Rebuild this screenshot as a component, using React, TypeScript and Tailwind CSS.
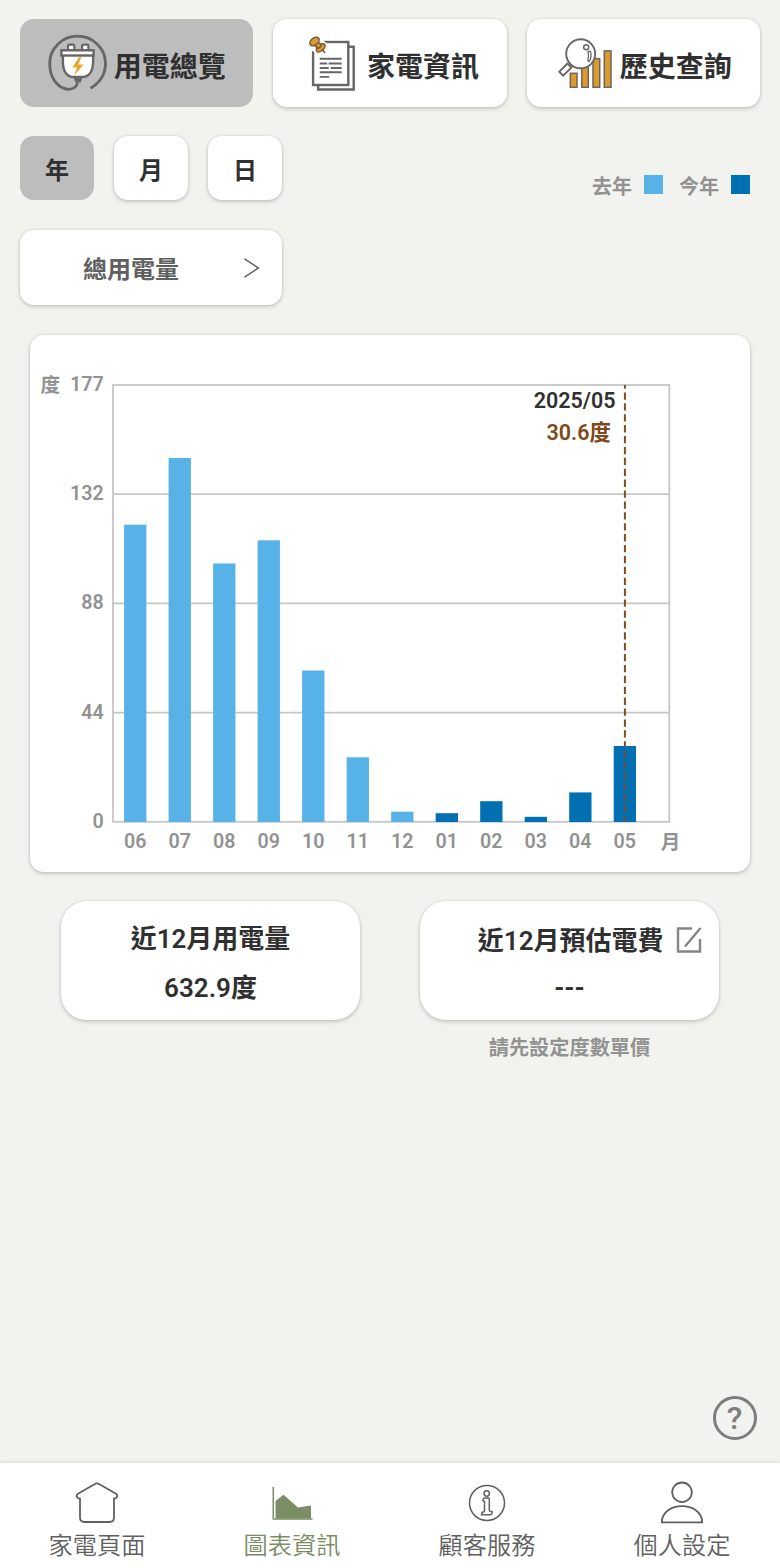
import type { ReactNode } from "react";

const FONT = "font-[Roboto,'Noto_Sans_CJK_TC',sans-serif]";
const CARD = "bg-white shadow-[0_2px_4px_rgba(0,0,0,0.16),0_0_3px_rgba(0,0,0,0.12)]";

function PlugIcon() {
  return (
    <svg className="h-[60px] w-[60px] shrink-0" viewBox="0 0 60 60" fill="none" stroke="#666" strokeWidth="2.800">
      <g transform="translate(-1 -1)">
        <path d="M30.500 50.500C30 54 27 57.300 21.500 57.300C10 56.500 2.700 45 2.700 31.500A27.900 27.300 0 0 1 58.500 31.500C58.500 42 53 50.500 43.500 56.300" />
        <rect x="21" y="12.600" width="6.300" height="6" rx="1.300" fill="#fff" strokeWidth="2.200" />
        <rect x="35.100" y="12.600" width="6.300" height="6" rx="1.300" fill="#fff" strokeWidth="2.200" />
        <path d="M15.900 22V31C16.500 40 20 45 27 45H35C42 45 45.500 40 46.100 31V22Z" fill="#fff" strokeWidth="2.400" />
        <rect x="14.400" y="18.300" width="32.200" height="5.200" fill="#fff" strokeWidth="2.400" />
        <path d="M27.500 46H34.500L33.500 50H28.500Z" fill="#666" strokeWidth="1" />
        <path d="M32 25L25.500 35.500H30L27.200 43.500L36.500 32.500H31.200L34.500 25Z" fill="#eba52d" stroke="none" />
      </g>
    </svg>
  );
}

function NotesIcon() {
  return (
    <svg className="h-[56px] w-[48px] shrink-0" viewBox="0 0 48 56" fill="none" stroke="#666" strokeWidth="2.400">
      <g transform="translate(-.3 1)">
        <path d="M41 10.700H46V53.500H10.500V49" />
        <rect x="5.400" y="6" width="35.200" height="43" fill="#fff" />
        <path d="M12 22.800H34M12 27.500H19.500M21 27.500H34M12 32H21M23 32H34M12 36.300H34M12 40.900H21.500" strokeWidth="1.900" />
      </g>
      <path d="M2 11L11 2L19.500 9L8 18.500L3 15Z" fill="#fff" stroke="none" />
      <g fill="#d39a3f" stroke="#765323" strokeWidth="1.400">
        <path d="M14 14L17 18" />
        <ellipse cx="12.700" cy="12.800" rx="5.300" ry="3" transform="rotate(-42 12.700 12.800)" />
        <path d="M5.800 9.500L9.700 13.500Q12.500 12.800 13.500 10L9.500 6.500Z" />
        <ellipse cx="6.500" cy="6.500" rx="5.300" ry="3.500" transform="rotate(-38 6.500 6.500)" />
      </g>
    </svg>
  );
}

function HistoryIcon() {
  return (
    <svg className="h-[54px] w-[56px] shrink-0" viewBox="0 0 56 54" fill="none" stroke="#666" strokeWidth="1.500">
      <g fill="#df9b29">
        <rect x="13.300" y="37.300" width="6.700" height="14" />
        <rect x="24.800" y="31" width="6.500" height="20.300" />
        <rect x="36" y="22.600" width="6.700" height="28.700" />
        <rect x="47.300" y="14.900" width="6.700" height="36.400" />
      </g>
      <path d="M10.500 27.500L2.300 35.700L6.100 39.700L14.500 31.500Z" fill="#fff" strokeWidth="1.900" />
      <circle cx="23.700" cy="17.800" r="14.500" fill="#fff" strokeWidth="1.900" />
      <circle cx="29.200" cy="11.300" r="2.500" />
      <path d="M31 15.500Q34 14.500 34 17.500Q34.500 22 32.500 25Q30.500 26 31 23Q32 20.500 31.200 17Z" strokeWidth="1.300" />
    </svg>
  );
}

function Tab({ label, icon, active = false, gap }: { label: string; icon: ReactNode; active?: boolean; gap: string }) {
  return (
    <button className={`flex h-[88px] items-center justify-center rounded-[14px] ${active ? "bg-[#bdbdbd]" : CARD} ${gap}`}>
      {icon}
      <span className="pt-[9px] text-[28px] leading-none font-bold">{label}</span>
    </button>
  );
}

function PeriodButton({ label, active = false }: { label: string; active?: boolean }) {
  return (
    <button className={`flex h-16 w-[74px] items-center justify-center rounded-[14px] pt-[5px] text-[24px] leading-none font-bold ${active ? "bg-[#bdbdbd]" : CARD}`}>
      {label}
    </button>
  );
}

const bars = [
  ["06", 297.3],
  ["07", 364],
  ["08", 258.5],
  ["09", 281.7],
  ["10", 151.5],
  ["11", 64.7],
  ["12", 10.3],
  ["01", 8.8],
  ["02", 20.8],
  ["03", 5.2],
  ["04", 29.6],
  ["05", 76],
] as const;

const ticks = ["177", "132", "88", "44", "0"];

function UsageChart() {
  return (
    <svg className="block h-[537px] w-[720px]" viewBox="0 0 720 537">
      <g stroke="#c6c6c6" strokeWidth="1.800" fill="none">
        <rect x="83" y="50" width="556.300" height="436.800" />
        <path d="M83 159.200H639.300M83 268.400H639.300M83 377.600H639.300" />
      </g>
      {bars.map(([month, height], i) => (
        <rect key={month} x={94.1 + i * 44.51} y={487 - height} width="22.300" height={height} fill={i < 7 ? "#56b2e7" : "#0070b2"} />
      ))}
      <path d="M594.900 50V411" stroke="#834c1d" strokeWidth="2" strokeDasharray="7.300 3.600" strokeDashoffset="3.500" />
      <path d="M594.900 411V487" stroke="#67504a" strokeWidth="2.500" strokeDasharray="7.300 3.600" strokeDashoffset="-4.500" />
      <g className="text-[19.7px] font-semibold" fill="#929292">
        {ticks.map((tick, i) => (
          <text key={tick} x="73.800" y={56 + i * 109.2} textAnchor="end">{tick}</text>
        ))}
        {bars.map(([month], i) => (
          <text key={month} x={105.2 + i * 44.51} y="513" textAnchor="middle">{month}</text>
        ))}
        <text x="10.500" y="56.500">度</text>
        <text x="640.500" y="513.500" textAnchor="middle">月</text>
      </g>
      <text className="text-[21.5px] font-semibold" x="585.500" y="73" textAnchor="end" fill="#303030">2025/05</text>
      <text className="text-[21.5px] font-semibold" x="581" y="105" textAnchor="end" fill="#804819">30.6度</text>
    </svg>
  );
}

function HomeIcon() {
  return (
    <svg className="h-[44px] w-[44px]" viewBox="0 0 44 44" fill="none" stroke="#606060" strokeWidth="1.800" strokeLinejoin="round">
      <path d="M5 17.500V36.500Q5 41 9.500 41H34.500Q39 41 39 36.500V17.500C42 18 43.500 14.500 41 12.700L24.500 3.200Q22 1.500 19.500 3.200L3 12.700C.5 14.500 2 18 5 17.500Z" />
    </svg>
  );
}

function AreaIcon() {
  return (
    <svg className="h-[44px] w-[44px]" viewBox="0 0 44 44" fill="#7a8d65">
      <path d="M2.500 6H4V37.200H42.500V38.700H2.500Z" />
      <path d="M5.500 20L13.500 13.800L28 26.500L41 24.600V37.500H5.500Z" />
    </svg>
  );
}

function InfoIcon() {
  return (
    <svg className="h-[44px] w-[44px]" viewBox="0 0 44 44" fill="none" stroke="#606060" strokeWidth="1.500">
      <circle cx="22" cy="22" r="17.500" />
      <circle cx="21.700" cy="12.500" r="2.700" />
      <path d="M18.800 17.500Q18.500 17 20.500 17H23.500Q24.300 17 24.300 18V29.500Q24.500 30.800 27 30.500Q27.500 33.800 25 33.800H16.500Q16.500 31 19 30.800Q19.500 30.700 19.500 29.500V20.500Q16.500 19.500 18.800 17.500Z" />
    </svg>
  );
}

function PersonIcon() {
  return (
    <svg className="h-[44px] w-[44px]" viewBox="0 0 44 44" fill="none" stroke="#606060" strokeWidth="1.800">
      <circle cx="22" cy="11.300" r="9.800" />
      <path d="M1.800 41.300C2 19.700 42 19.700 42.200 41.300Z" />
    </svg>
  );
}

function NavItem({ label, icon, active = false }: { label: string; icon: ReactNode; active?: boolean }) {
  return (
    <button className={`flex flex-col items-center pt-[18px] pr-px ${active ? "text-[#7a8d65]" : "text-[#606060]"}`}>
      {icon}
      <span className="mt-[9px] text-[24.2px] leading-6 font-[350]">{label}</span>
    </button>
  );
}

export default function App() {
  return (
    <div className={`flex h-[1568px] w-[780px] flex-col bg-[#f2f3ee] text-[#303030] ${FONT}`}>
      <header className="grid grid-cols-3 gap-5 px-5 pt-[19px]">
        <Tab label="用電總覽" icon={<PlugIcon />} active gap="gap-1.5" />
        <Tab label="家電資訊" icon={<NotesIcon />} gap="gap-[11px] pl-[7px]" />
        <Tab label="歷史查詢" icon={<HistoryIcon />} gap="gap-[7px] pl-0.5" />
      </header>

      <div className="mt-[29px] flex justify-between pr-[30px] pl-5">
        <div className="flex gap-5">
          <PeriodButton label="年" active />
          <PeriodButton label="月" />
          <PeriodButton label="日" />
        </div>
        <div className="flex items-center pt-[33px] text-[20px] leading-none font-bold text-[#929292]">
          <span className="pt-1">去年</span>
          <span className="ml-3 h-[19px] w-[19px] bg-[#56b2e7]" />
          <span className="ml-4 pt-1">今年</span>
          <span className="ml-3 h-[19px] w-[19px] bg-[#0070b2]" />
        </div>
      </div>

      <button className={`mt-[30px] ml-5 flex h-[75px] w-[262px] items-center justify-between rounded-[14px] pr-[22px] pl-[63px] ${CARD}`}>
        <span className="pt-1 text-[24px] leading-none font-bold text-[#606060]">總用電量</span>
        <svg className="h-5 w-4" viewBox="0 0 16 20" fill="none" stroke="#606060" strokeWidth="1.500">
          <path d="M.5 .8L14.500 10L.5 19.200" />
        </svg>
      </button>

      <section className={`mx-[30px] mt-[30px] rounded-[14px] ${CARD}`}>
        <UsageChart />
      </section>

      <section className="mt-[29px] flex justify-between px-[61px]">
        <div className={`flex h-[119px] w-[299px] flex-col items-center rounded-[26px] pt-[25px] text-[26px] leading-[26px] font-semibold ${CARD}`}>
          <span>近12月用電量</span>
          <span className="mt-[23px]">632.9度</span>
        </div>
        <div className="flex w-[299px] flex-col items-center">
          <div className={`flex h-[119px] w-full flex-col items-center rounded-[26px] pt-[26px] text-[26px] leading-[26px] font-semibold ${CARD}`}>
            <div className="flex w-full items-center justify-end gap-3 pr-[17.500px]">
              <span>近12月預估電費</span>
              <svg className="h-[27px] w-[26px]" viewBox="0 0 26 27" fill="none" stroke="#858585" strokeWidth="2.400">
                <path d="M16 1.500H2V24.500H24V12M9 19.500L24.500 1" />
              </svg>
            </div>
            <span className="mt-[21px] font-bold">---</span>
          </div>
          <p className="mt-[18px] text-[20.2px] leading-5 font-bold text-[#929292]">請先設定度數單價</p>
        </div>
      </section>

      <button className="mt-auto mr-[23px] mb-[23px] flex h-11 w-11 items-center justify-center self-end rounded-full border-[3.500px] border-[#7d7d7d] pr-px text-[32px] leading-none font-medium text-[#7d7d7d]">
        ?
      </button>

      <nav className="grid h-[105px] grid-cols-4 bg-white shadow-[0_0_4px_rgba(0,0,0,0.16)]">
        <NavItem label="家電頁面" icon={<HomeIcon />} />
        <NavItem label="圖表資訊" icon={<AreaIcon />} active />
        <NavItem label="顧客服務" icon={<InfoIcon />} />
        <NavItem label="個人設定" icon={<PersonIcon />} />
      </nav>
    </div>
  );
}
